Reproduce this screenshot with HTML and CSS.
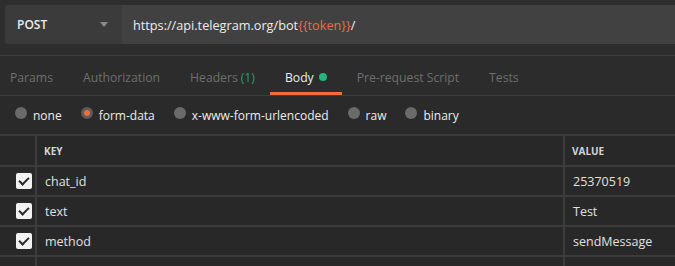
FILE: index.html
```html
<!DOCTYPE html>
<html lang="en">
<head>
  <meta charset="UTF-8" />
  <title>POST request</title>
  <link rel="stylesheet" href="styles.css">
</head>
<body>
  <div class="request-bar">
    <div class="method">
      <span>POST</span>
      <span class="caret"></span>
    </div>
    <div class="url">https://api.telegram.org/bot<span class="var">{{token}}</span>/</div>
  </div>

  <div class="tabs">
    <div class="tab">Params</div>
    <div class="tab">Authorization</div>
    <div class="tab">Headers <span class="count">(1)</span></div>
    <div class="tab active">Body <span class="dot"></span></div>
    <div class="tab">Pre-request Script</div>
    <div class="tab">Tests</div>
  </div>

  <div class="body-types">
    <label class="radio"><span class="circle"></span>none</label>
    <label class="radio"><span class="circle checked"></span>form-data</label>
    <label class="radio"><span class="circle"></span>x-www-form-urlencoded</label>
    <label class="radio"><span class="circle"></span>raw</label>
    <label class="radio"><span class="circle"></span>binary</label>
  </div>

  <div class="params">
    <div class="cell"></div>
    <div class="cell head">Key</div>
    <div class="cell head">Value</div>

    <div class="cell check"><span class="box"></span></div>
    <div class="cell">chat_id</div>
    <div class="cell">25370519</div>

    <div class="cell check"><span class="box"></span></div>
    <div class="cell">text</div>
    <div class="cell">Test</div>

    <div class="cell check"><span class="box"></span></div>
    <div class="cell">method</div>
    <div class="cell">sendMessage</div>

    <div class="cell"></div>
    <div class="cell"></div>
    <div class="cell"></div>
  </div>
</body>
</html>
```

FILE: styles.css
```css
body {
  margin: 0;
  background: #282828;
  font-family: 'Open Sans', sans-serif;
  font-size: 12px;
  color: #e6e6e6;
  overflow: hidden;
}

.request-bar {
  display: flex;
  height: 39px;
  padding: 5px 0 11px 5px;
  background: #2e2e2e;
  border-bottom: 1px solid #3d3d3d;
}

.method {
  width: 117px;
  box-sizing: border-box;
  display: flex;
  align-items: center;
  justify-content: space-between;
  padding: 0 14px 0 12px;
  background: #3b3b3b;
  border-radius: 3px 0 0 3px;
  font-weight: 600;
  color: #ececec;
}

.caret {
  width: 0;
  height: 0;
  border-left: 4px solid transparent;
  border-right: 4px solid transparent;
  border-top: 5px solid #8a8a8a;
}

.url {
  flex: 1;
  display: flex;
  align-items: center;
  padding-left: 11px;
  font-size: 12.7px;
  background: #414141;
  color: #ececec;
}

.url .var {
  color: #e5704a;
}

.tabs {
  display: flex;
  height: 40px;
  padding-left: 10px;
  background: #2c2c2c;
  border-bottom: 1px solid #3d3d3d;
  box-sizing: border-box;
}

.tab {
  display: flex;
  align-items: center;
  padding: 3px 15px 0;
  font-size: 12.2px;
  color: #6e6e6e;
}

.tab:first-child {
  padding-left: 0;
}

.tab .count {
  color: #2a9d6e;
  margin-left: 3px;
}

.tab.active {
  color: #ececec;
  box-shadow: inset 0 -3px 0 #f26b3a;
}

.tab .dot {
  width: 8px;
  height: 8px;
  margin-left: 5px;
  border-radius: 50%;
  background: #26b47f;
}

.body-types {
  display: flex;
  align-items: center;
  height: 38px;
  padding-left: 15px;
  background: #2a2a2a;
}

.radio {
  display: flex;
  align-items: center;
  margin-right: 19px;
  font-size: 12px;
  color: #ececec;
}

.circle {
  width: 12px;
  height: 12px;
  margin: -4px 6px 0 0;
  border-radius: 50%;
  background: #6a6a6a;
  box-sizing: border-box;
}

.circle.checked {
  background: #f26b3a;
  border: 3px solid #5c5c5c;
}

.params {
  display: grid;
  grid-template-columns: 35px 526px 1fr;
  grid-template-rows: 29px 28px 28px 28px 10px;
  gap: 2px;
  padding-top: 2px;
  background: #3c3c3c;
}

.cell {
  display: flex;
  align-items: center;
  padding-left: 8px;
  font-size: 12.5px;
  background: #282828;
  color: #e0e0e0;
}

.cell.head {
  padding-left: 7px;
  font-size: 10px;
  font-weight: 700;
  text-transform: uppercase;
  color: #d4d4d4;
}

.cell.check {
  padding-left: 16px;
}

.box {
  position: relative;
  width: 16px;
  height: 16px;
  border-radius: 2px;
  background: #f2f2f2;
}

.box::after {
  content: '';
  position: absolute;
  left: 5px;
  top: 2px;
  width: 4px;
  height: 8px;
  border-right: 2px solid #2a2a2a;
  border-bottom: 2px solid #2a2a2a;
  transform: rotate(45deg);
}
```
